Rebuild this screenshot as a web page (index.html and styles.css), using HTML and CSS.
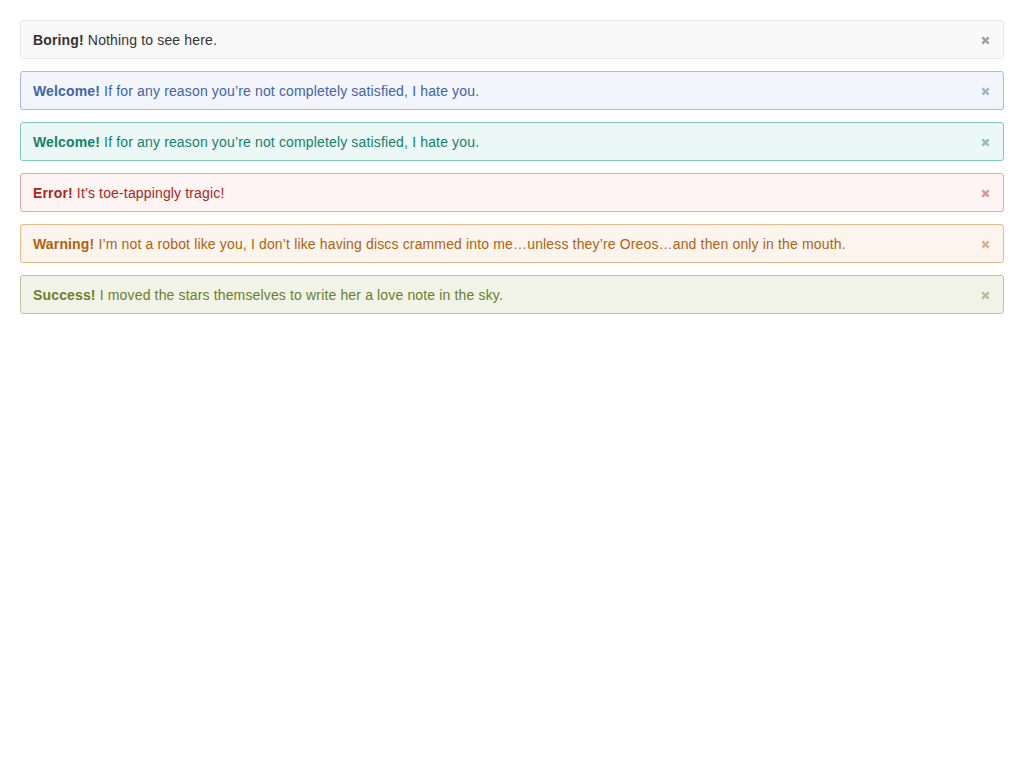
FILE: index.html
```html
<!DOCTYPE html>
<html>
<head>
<meta charset="utf-8">
<link rel="stylesheet" href="styles.css">
</head>
<body>
<div class="stack">
  <div class="alert alert-default"><p><b>Boring!</b> Nothing to see here.</p><span class="close"><svg viewBox="0 0 10 10" width="9" height="9"><path d="M1.5 1.5L8.5 8.5M8.5 1.5L1.5 8.5"/></svg></span></div>
  <div class="alert alert-info"><p><b>Welcome!</b> If for any reason you’re not completely satisfied, I hate you.</p><span class="close"><svg viewBox="0 0 10 10" width="9" height="9"><path d="M1.5 1.5L8.5 8.5M8.5 1.5L1.5 8.5"/></svg></span></div>
  <div class="alert alert-teal"><p><b>Welcome!</b> If for any reason you’re not completely satisfied, I hate you.</p><span class="close"><svg viewBox="0 0 10 10" width="9" height="9"><path d="M1.5 1.5L8.5 8.5M8.5 1.5L1.5 8.5"/></svg></span></div>
  <div class="alert alert-error"><p><b>Error!</b> It’s toe-tappingly tragic!</p><span class="close"><svg viewBox="0 0 10 10" width="9" height="9"><path d="M1.5 1.5L8.5 8.5M8.5 1.5L1.5 8.5"/></svg></span></div>
  <div class="alert alert-warning"><p><b>Warning!</b> I’m not a robot like you, I don’t like having discs crammed into me…unless they’re Oreos…and then only in the mouth.</p><span class="close"><svg viewBox="0 0 10 10" width="9" height="9"><path d="M1.5 1.5L8.5 8.5M8.5 1.5L1.5 8.5"/></svg></span></div>
  <div class="alert alert-success"><p><b>Success!</b> I moved the stars themselves to write her a love note in the sky.</p><span class="close"><svg viewBox="0 0 10 10" width="9" height="9"><path d="M1.5 1.5L8.5 8.5M8.5 1.5L1.5 8.5"/></svg></span></div>
</div>
</body>
</html>
```

FILE: styles.css
```css
html, body {
  margin: 0;
  padding: 0;
  background: #ffffff;
}
body {
  padding: 20px;
  font-family: "Liberation Sans", Arial, sans-serif;
  font-size: 14px;
  letter-spacing: 0.15px;
}
.stack {
  display: flex;
  flex-direction: column;
  gap: 12px;
}
.alert {
  box-sizing: border-box;
  height: 39px;
  display: flex;
  align-items: center;
  justify-content: space-between;
  padding: 0 13px 0 12px;
  border: 1px solid;
  border-radius: 3px;
}
.alert p {
  margin: 0;
  line-height: 20px;
  padding-top: 1px;
}
.alert b {
  font-weight: bold;
}
.close {
  display: flex;
  width: 9px;
  height: 9px;
  margin-top: 2px;
  opacity: 0.45;
}
.close svg path {
  stroke: currentColor;
  stroke-width: 2.6;
  fill: none;
}
.alert-default { background: #f9f9f9; border-color: #e8e8e8; color: #333333; }
.alert-info { background: #f3f5fa; border-color: #a6bbe0; color: #3d65a8; }
.alert-teal { background: #ecf8f6; border-color: #80c9b8; color: #16806b; }
.alert-error { background: #fdf4f3; border-color: #e4aaa3; color: #a8281c; }
.alert-warning { background: #fdf5ed; border-color: #e6bb8e; color: #b06210; }
.alert-success { background: #f1f3e8; border-color: #b9c898; color: #6b8029; }
```
